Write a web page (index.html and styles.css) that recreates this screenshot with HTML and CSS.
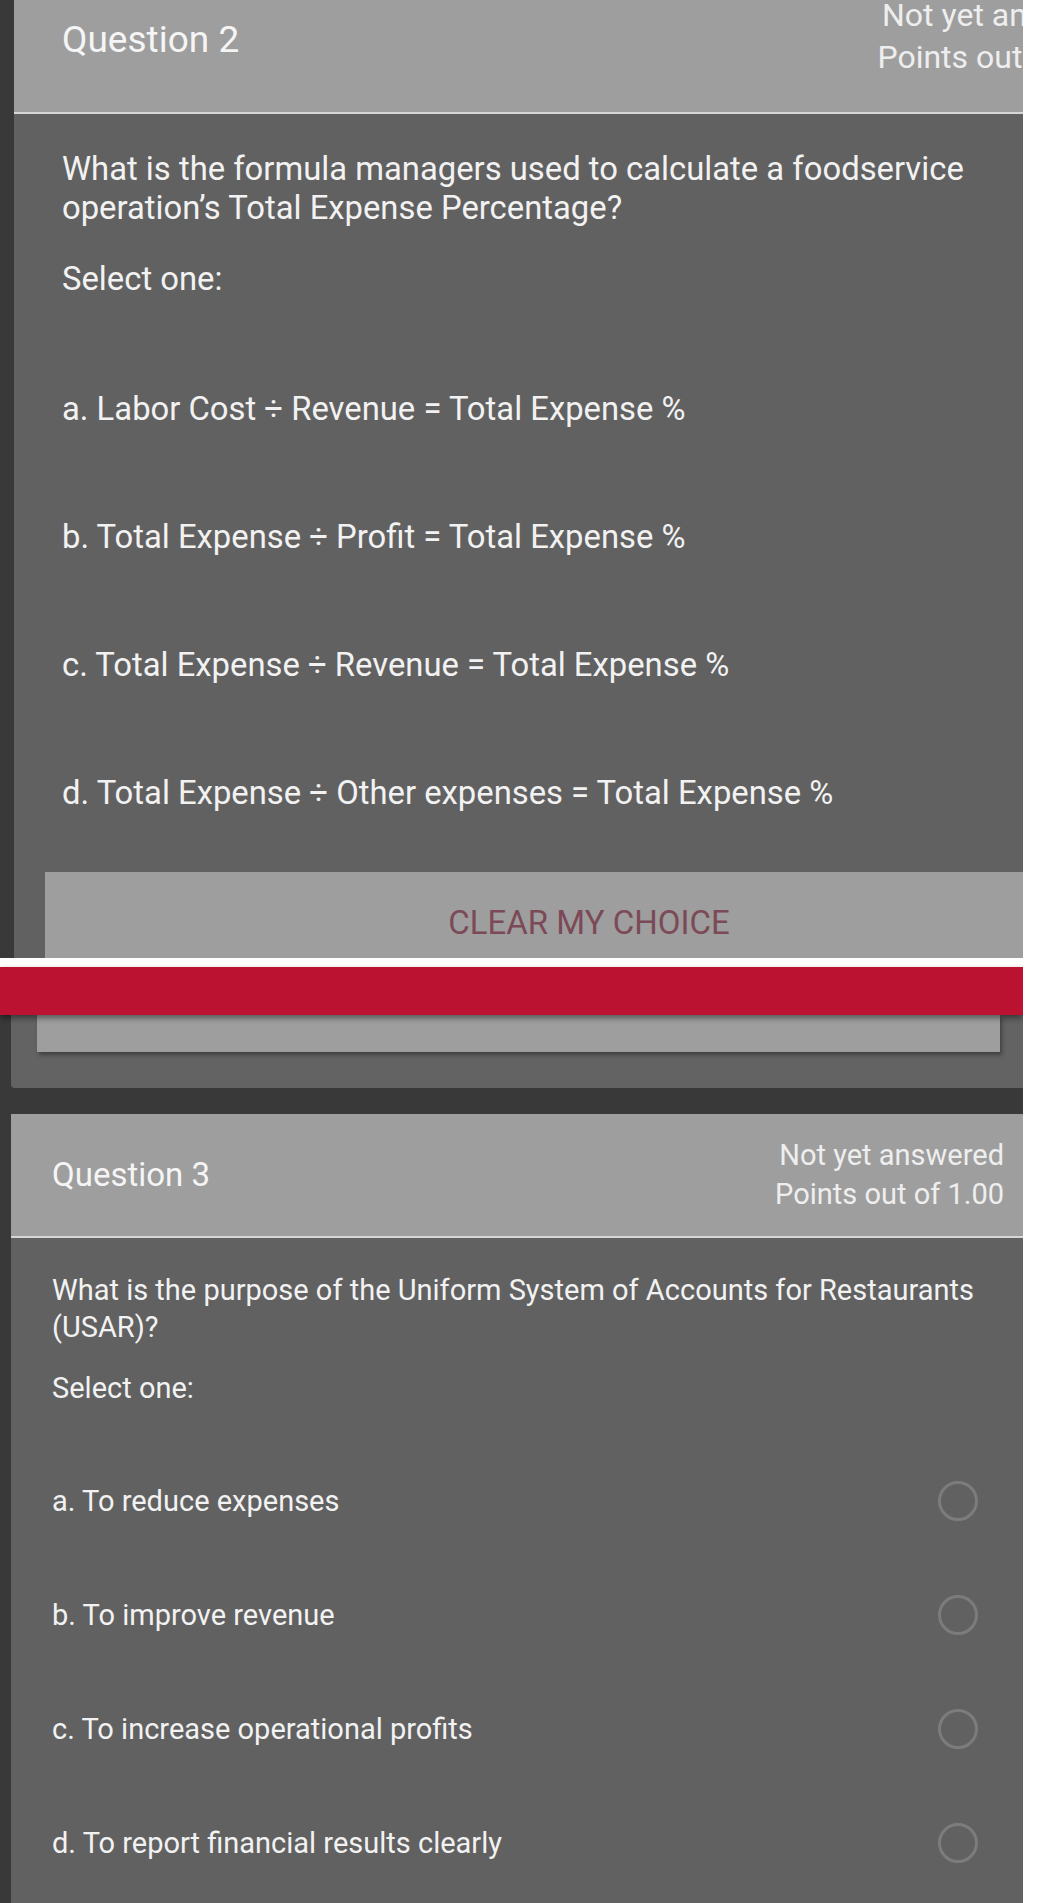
FILE: index.html
```html
<!DOCTYPE html>
<html lang="en">
<head>
<meta charset="utf-8">
<title>Quiz</title>
<link rel="stylesheet" href="styles.css">
</head>
<body>
<div class="page">
  <section class="card card-lg">
    <header class="q-head">
      <h2 class="q-title">Question 2</h2>
      <div class="q-status">
        <div>Not yet answered</div>
        <div>Points out of 1.00</div>
      </div>
    </header>
    <div class="q-body">
      <p class="q-text">What is the formula managers used to calculate a foodservice operation’s Total Expense Percentage?</p>
      <p class="q-prompt">Select one:</p>
      <div class="answers">
        <div class="answer"><span>a. Labor Cost ÷ Revenue = Total Expense %</span><span class="radio"></span></div>
        <div class="answer"><span>b. Total Expense ÷ Profit = Total Expense %</span><span class="radio"></span></div>
        <div class="answer"><span>c. Total Expense ÷ Revenue = Total Expense %</span><span class="radio"></span></div>
        <div class="answer"><span>d. Total Expense ÷ Other expenses = Total Expense %</span><span class="radio"></span></div>
      </div>
      <button class="clear-btn" type="button">CLEAR MY CHOICE</button>
    </div>
  </section>

  <div class="seam-white"></div>
  <div class="seam-red"></div>
  <div class="card-tail"><div class="tail-btn"></div></div>

  <section class="card card-sm">
    <header class="q-head">
      <h2 class="q-title">Question 3</h2>
      <div class="q-status">
        <div>Not yet answered</div>
        <div>Points out of 1.00</div>
      </div>
    </header>
    <div class="q-body">
      <p class="q-text">What is the purpose of the Uniform System of Accounts for Restaurants (USAR)?</p>
      <p class="q-prompt">Select one:</p>
      <div class="answers">
        <div class="answer"><span>a. To reduce expenses</span><span class="radio"></span></div>
        <div class="answer"><span>b. To improve revenue</span><span class="radio"></span></div>
        <div class="answer"><span>c. To increase operational profits</span><span class="radio"></span></div>
        <div class="answer"><span>d. To report financial results clearly</span><span class="radio"></span></div>
      </div>
    </div>
  </section>
</div>
</body>
</html>
```

FILE: styles.css
```css
* { box-sizing: border-box; }

html, body {
  margin: 0;
  padding: 0;
  background: #ffffff;
}

body {
  font-family: Roboto, "Noto Sans", sans-serif;
  color: #f2f2f2;
}

.page {
  width: 1023px;
  height: 1903px;
  background: #393939;
  overflow: hidden;
}

.card {
  background: #616161;
}

.q-head {
  display: flex;
  justify-content: space-between;
  background: #9e9e9e;
  border-bottom: 2px solid #d6d6d6;
}

.q-title {
  margin: 0;
  font-weight: 400;
  color: #f5f5f5;
}

.q-status {
  text-align: right;
  color: #eeeeee;
  white-space: nowrap;
}

.q-text,
.q-prompt {
  margin: 0;
}

.answer {
  display: flex;
  align-items: center;
  justify-content: space-between;
}

.radio {
  flex: none;
  border-radius: 50%;
  border: 3px solid #7c7c7c;
}

/* ---------- Question 2 (larger, cropped) ---------- */
.card-lg {
  margin-left: 14px;
  width: 1140px;
}

.card-lg .q-head {
  height: 114px;
  align-items: flex-start;
  padding: 0 20px 0 48px;
}

.card-lg .q-title {
  font-size: 37px;
  line-height: 44px;
  margin-top: 18px;
}

.card-lg .q-status {
  font-size: 32px;
  line-height: 42px;
  margin-top: -6px;
  margin-right: 4px;
}

.card-lg .q-body {
  padding: 36px 0 0 48px;
}

.card-lg .q-text,
.card-lg .q-prompt {
  font-size: 32.8px;
  line-height: 39px;
}

.card-lg .q-text {
  max-width: 960px;
}

.card-lg .q-prompt {
  margin-top: 32px;
}

.card-lg .answers {
  margin-top: 46px;
  padding-right: 51px;
}

.card-lg .answer {
  height: 128px;
  font-size: 32.8px;
  line-height: 39px;
}

.card-lg .radio {
  width: 45px;
  height: 45px;
}

.clear-btn {
  display: block;
  margin: 15px 0 0 -17px;
  width: 1088px;
  height: 86px;
  padding: 31px 0 15px;
  border: none;
  background: #9e9e9e;
  color: #7c4a57;
  font-family: Roboto, "Noto Sans", sans-serif;
  font-size: 33px;
  line-height: 40px;
  text-align: center;
}

/* ---------- seam between screenshots ---------- */
.seam-white {
  height: 9px;
  background: #ffffff;
}

.seam-red {
  position: relative;
  z-index: 1;
  height: 48px;
  background: #bb1232;
  box-shadow: 0 3px 6px rgba(0, 0, 0, 0.45);
}

.card-tail {
  margin-left: 11px;
  padding: 0 0 36px 26px;
  background: #636363;
  border-bottom-left-radius: 4px;
}

.tail-btn {
  width: 963px;
  height: 37px;
  background: #9e9e9e;
  box-shadow: 2px 3px 4px rgba(0, 0, 0, 0.35);
}

/* ---------- Question 3 ---------- */
.card-sm {
  margin-top: 26px;
  margin-left: 11px;
  width: 1012px;
  min-height: 800px;
  border-top-left-radius: 3px;
}

.card-sm .q-head {
  height: 124px;
  align-items: center;
  padding: 0 19px 0 41px;
}

.card-sm .q-title {
  font-size: 33px;
  line-height: 40px;
}

.card-sm .q-status {
  font-size: 29px;
  line-height: 39px;
}

.card-sm .q-body {
  padding: 34px 0 0 41px;
}

.card-sm .q-text,
.card-sm .q-prompt {
  font-size: 29px;
  line-height: 37px;
}

.card-sm .q-text {
  max-width: 940px;
}

.card-sm .q-prompt {
  margin-top: 24px;
}

.card-sm .answers {
  margin-top: 37px;
  padding-right: 45px;
}

.card-sm .answer {
  height: 114px;
  font-size: 29px;
  line-height: 37px;
}

.card-sm .radio {
  width: 40px;
  height: 40px;
}
```
